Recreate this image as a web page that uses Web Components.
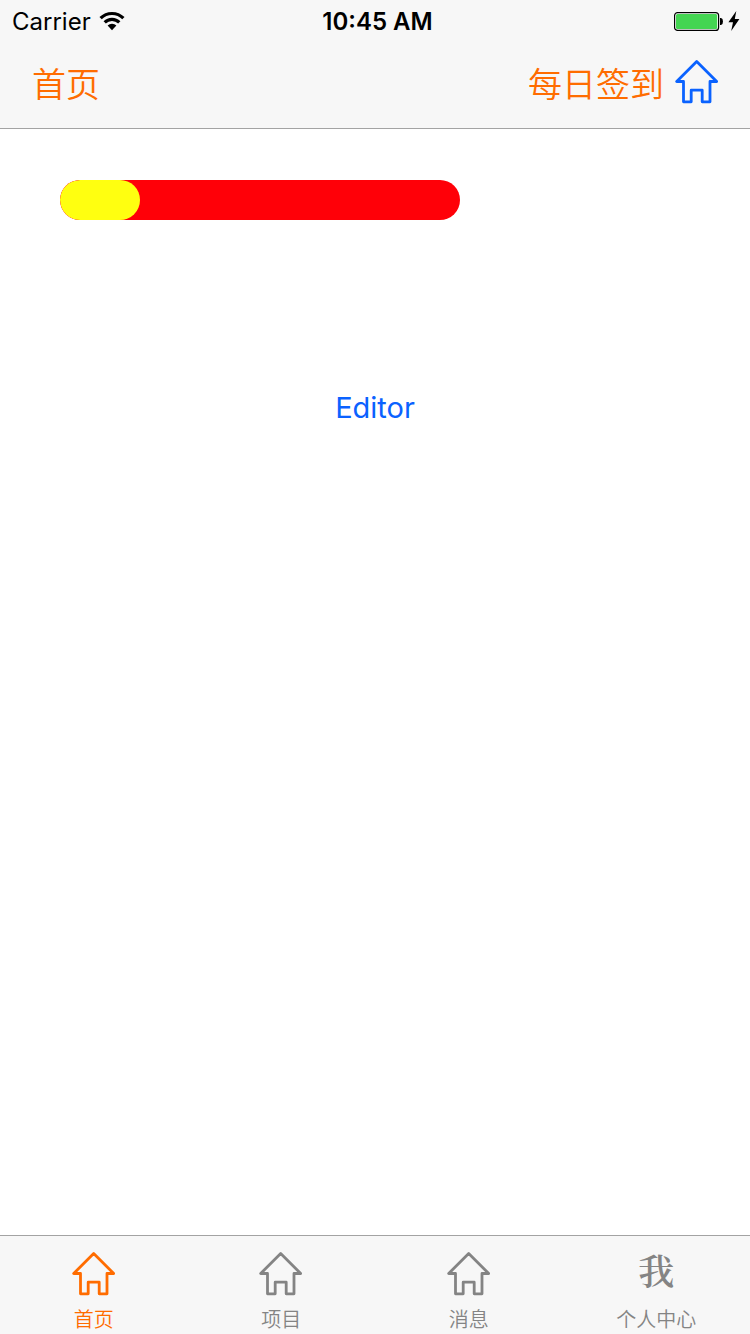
<!DOCTYPE html>
<html lang="zh-CN">
<head>
<meta charset="utf-8">
<meta name="viewport" content="width=device-width, initial-scale=1">
<title>首页</title>
<style>
  html, body { margin: 0; height: 100%; }
  body { background: #fff; font-family: Inter, "Noto Sans CJK SC", sans-serif; }
</style>
</head>
<body>
<app-screen></app-screen>

<script>
const define = (name, html) => {
  const template = document.createElement('template');
  template.innerHTML = html;
  customElements.define(name, class extends HTMLElement {
    constructor() {
      super();
      this.attachShadow({ mode: 'open' }).append(template.content.cloneNode(true));
    }
  });
};

define('house-icon', `
  <style>
    :host { display: block; width: 44px; height: 44px; }
    svg { display: block; }
  </style>
  <svg width="44" height="44" viewBox="0 0 44 44" fill="none" stroke="currentColor" stroke-width="2.8" stroke-linejoin="round" aria-hidden="true">
    <path d="M21.7 1.6 L1.7 21.5 H8.5 V41.8 H16.2 V30.2 H27.2 V41.8 H35 V21.5 H41.7 Z"/>
  </svg>`);

define('status-bar', `
  <style>
    :host { display: grid; grid-template-columns: 1fr auto 1fr; align-items: center; height: 40px; padding: 0 10px 0 12px; font-size: 24px; line-height: 40px; color: #000; }
    .left, .right { display: flex; align-items: center; }
    .left { gap: 8px; }
    .right { justify-content: flex-end; gap: 4px; }
    span, time { padding-top: 2px; }
    time { font-weight: 600; padding-left: 3px; }
    svg { display: block; }
  </style>
  <div class="left">
    <span>Carrier</span>
    <svg width="26" height="20" viewBox="0 0 26 20" aria-label="Wi-Fi">
      <g fill="none" stroke="#000" stroke-width="3.2">
        <path d="M1.6 7.2 A16.2 16.2 0 0 1 24.4 7.2"/>
        <path d="M5.7 11.4 A10.3 10.3 0 0 1 20.3 11.4"/>
      </g>
      <path d="M8.6 14.6 A6.2 6.2 0 0 1 17.4 14.6 L13 19.2 Z"/>
    </svg>
  </div>
  <time>10:45 AM</time>
  <div class="right">
    <svg width="50" height="20" viewBox="0 0 50 20" aria-label="Battery">
      <rect x="0.6" y="1.6" width="44" height="17.8" rx="3" fill="#fff" stroke="#000" stroke-width="1.2"/>
      <rect x="2" y="3" width="41.2" height="15" rx="1.5" fill="#44d552"/>
      <path d="M46 7 H47 Q49 7.4 49 10.5 Q49 13.6 47 14 H46 Z"/>
    </svg>
    <svg width="12" height="20" viewBox="0 0 12 20" aria-label="Charging">
      <path d="M8.3 0 L0.4 11.2 H5 L3.2 20 L11.4 8 H6.8 Z"/>
    </svg>
  </div>`);

define('nav-bar', `
  <style>
    :host { display: flex; justify-content: space-between; align-items: center; height: 84px; padding: 0 31px 4px 32px; }
    button { display: block; padding: 0; border: 0; background: none; font: inherit; font-size: 34px; line-height: 48px; font-weight: 350; color: #ff6c00; cursor: pointer; }
    .text { padding-top: 6px; }
    .actions { display: flex; align-items: center; gap: 11px; }
    .home { color: #0a62ff; }
  </style>
  <button type="button" class="text">首页</button>
  <div class="actions">
    <button type="button" class="text">每日签到</button>
    <button type="button" class="home" aria-label="Home"><house-icon></house-icon></button>
  </div>`);

define('progress-pill', `
  <style>
    :host { display: block; width: 400px; max-width: 100%; height: 40px; border-radius: 20px; background: #ff0008; overflow: hidden; }
    div { width: 20%; height: 100%; border-radius: 20px; background: #ffff10; }
  </style>
  <div role="progressbar" aria-label="Progress" aria-valuemin="0" aria-valuemax="100" aria-valuenow="20"></div>`);

define('tab-item', `
  <style>
    :host { display: block; color: #848484; }
    :host([active]) { color: #ff6c00; }
    a { display: flex; flex-direction: column; align-items: center; gap: 9px; padding-top: 16px; color: inherit; text-decoration: none; font-size: 20px; line-height: 30px; font-weight: 350; }
  </style>
  <a href="#"><slot name="icon"></slot><slot></slot></a>`);

define('tab-bar', `
  <style>
    :host { display: grid; grid-template-columns: repeat(4, 1fr); height: 98px; border-top: 1px solid #a3a3a3; background: #f7f7f7; }
    .me { height: 44px; font-family: "Noto Serif CJK SC", "Noto Sans CJK SC", serif; font-size: 36px; line-height: 36px; font-weight: 600; }
  </style>
  <tab-item active><house-icon slot="icon"></house-icon>首页</tab-item>
  <tab-item><house-icon slot="icon"></house-icon>项目</tab-item>
  <tab-item><house-icon slot="icon"></house-icon>消息</tab-item>
  <tab-item><span class="me" slot="icon">我</span>个人中心</tab-item>`);

define('app-screen', `
  <style>
    :host { display: flex; flex-direction: column; min-height: 100vh; }
    header { background: #f7f7f7; border-bottom: 1px solid #a3a3a3; }
    main { flex: 1; display: flex; flex-direction: column; padding: 51px 60px; }
    button { align-self: center; margin-top: 168px; padding: 0; border: 0; background: none; font: inherit; font-size: 29px; line-height: 40px; color: #0a62ff; cursor: pointer; }
  </style>
  <header><status-bar></status-bar><nav-bar></nav-bar></header>
  <main>
    <progress-pill></progress-pill>
    <button type="button">Editor</button>
  </main>
  <tab-bar></tab-bar>`);
</script>
</body>
</html>
